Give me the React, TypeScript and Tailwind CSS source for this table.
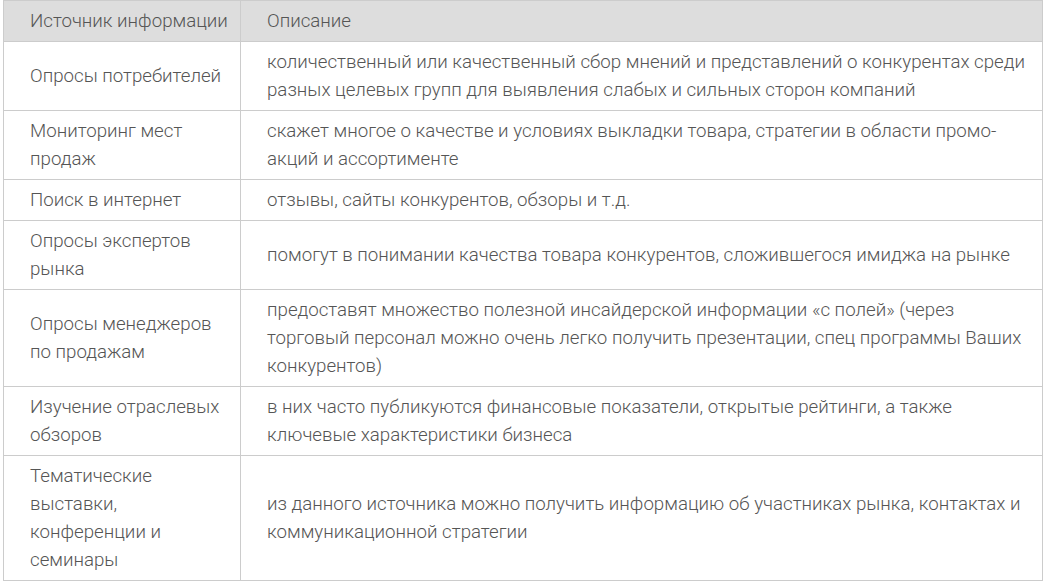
import React from "react";

const rows: { left: string[]; right: string[] }[] = [
  {
    left: ["Опросы потребителей"],
    right: [
      "количественный или качественный сбор мнений и представлений о конкурентах среди",
      "разных целевых групп для выявления слабых и сильных сторон компаний",
    ],
  },
  {
    left: ["Мониторинг мест", "продаж"],
    right: [
      "скажет многое о качестве и условиях выкладки товара, стратегии в области промо-",
      "акций и ассортименте",
    ],
  },
  { left: ["Поиск в интернет"], right: ["отзывы, сайты конкурентов, обзоры и т.д."] },
  {
    left: ["Опросы экспертов", "рынка"],
    right: ["помогут в понимании качества товара конкурентов, сложившегося имиджа на рынке"],
  },
  {
    left: ["Опросы менеджеров", "по продажам"],
    right: [
      "предоставят множество полезной инсайдерской информации «с полей» (через",
      "торговый персонал можно очень легко получить презентации, спец программы Ваших",
      "конкурентов)",
    ],
  },
  {
    left: ["Изучение отраслевых", "обзоров"],
    right: [
      "в них часто публикуются финансовые показатели, открытые рейтинги, а также",
      "ключевые характеристики бизнеса",
    ],
  },
  {
    left: ["Тематические", "выставки,", "конференции и", "семинары"],
    right: [
      "из данного источника можно получить информацию об участниках рынка, контактах и",
      "коммуникационной стратегии",
    ],
  },
];

function Lines({ lines }: { lines: string[] }) {
  return (
    <>
      {lines.map((l, i) => (
        <div key={i} className="whitespace-nowrap">
          {l}
        </div>
      ))}
    </>
  );
}

export default function App() {
  return (
    <div
      className="w-[1046px] h-[583px] bg-white pl-[3px] text-[#555] text-[18.7px] leading-[28px] font-light"
      style={{ fontFamily: "Roboto, 'Liberation Sans', sans-serif" }}
    >
      <table className="w-[1040px] border-collapse table-fixed">
        <colgroup>
          <col className="w-[237px]" />
          <col />
        </colgroup>
        <thead>
          <tr className="bg-[#dddddd]">
            <th className="border border-[#cccccc] pl-[26px] pr-[10px] py-[6px] text-left font-light align-middle">
              Источник информации
            </th>
            <th className="border border-[#cccccc] pl-[26px] pr-[10px] py-[6px] text-left font-light align-middle">
              Описание
            </th>
          </tr>
        </thead>
        <tbody>
          {rows.map((r, i) => (
            <tr key={i}>
              <td className="border border-[#cccccc] pl-[26px] pr-[10px] py-[6px] align-middle">
                <Lines lines={r.left} />
              </td>
              <td className="border border-[#cccccc] pl-[26px] pr-[10px] py-[6px] align-middle">
                <Lines lines={r.right} />
              </td>
            </tr>
          ))}
        </tbody>
      </table>
    </div>
  );
}
